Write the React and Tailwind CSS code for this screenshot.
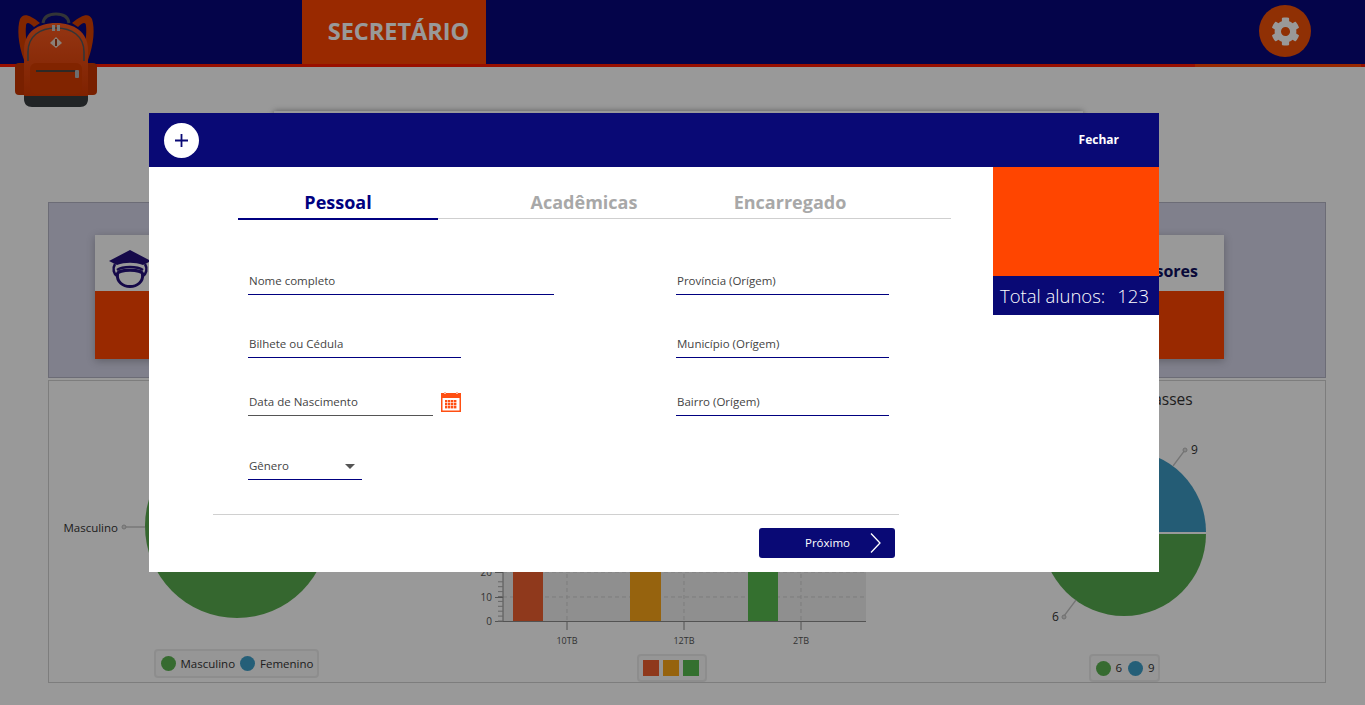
import React from "react";
import { FaCog } from "react-icons/fa";

const font = { fontFamily: '"Open Sans","Noto Sans",sans-serif' };

function Backpack() {
  return (
    <svg width="110" height="115" viewBox="0 0 110 115">
      <defs>
        <linearGradient id="bp" x1="0" y1="0" x2="0" y2="1">
          <stop offset="0" stopColor="#f85a20" />
          <stop offset="1" stopColor="#d23800" />
        </linearGradient>
      </defs>
      <path d="M43 23C44 16 50 14 56 14C62 14 68 16 69 23" fill="none" stroke="#55595c" strokeWidth="3" />
      <path d="M24 60C18 44 17 28 20 19C23 13 29 14 40 23L34 27C29 22 26 22 26 26C25 34 27 44 28 50Z" fill="#d84000" />
      <path d="M88 60C94 44 95 28 92 19C89 13 83 14 72 23L78 27C83 22 86 22 86 26C87 34 85 44 84 50Z" fill="#d84000" />
      <rect x="15" y="63" width="20" height="32" rx="4" fill="#c83600" />
      <rect x="77" y="63" width="20" height="32" rx="4" fill="#c83600" />
      <path d="M24 99V50C24 32 38 23 56 23C74 23 88 32 88 50V99Z" fill="url(#bp)" />
      <path d="M28 61V52C28 36 40 28 56 28C72 28 84 36 84 52V61" fill="none" stroke="#55595c" strokeWidth="1.6" />
      <rect x="52" y="25" width="3" height="6" fill="#c9c9c9" />
      <rect x="57" y="25" width="3" height="6" fill="#c9c9c9" />
      <path d="M56 37L62 43L56 48L50 43Z" fill="#e8d5c8" />
      <rect x="55" y="39" width="2" height="7" fill="#a83a10" />
      <rect x="30" y="63" width="52" height="31" rx="6" fill="#d83c00" />
      <rect x="36" y="70" width="42" height="2" fill="#4b4540" />
      <rect x="75" y="70" width="4" height="8" rx="1" fill="#b8b8b8" />
      <path d="M24 96H88V99C88 104 85 107 80 107H32C27 107 24 104 24 99Z" fill="#383d40" />
    </svg>
  );
}

function GradIcon() {
  return (
    <svg width="60" height="42" viewBox="0 0 60 42" className="block">
      <path d="M1 13L22 2L43 13L35 17C27 14 17 14 9 17Z" fill="#24107a" />
      <path d="M7 16C4 21 6 26 9 28M37 16C40 21 38 26 35 28" fill="none" stroke="#24107a" strokeWidth="2.5" />
      <path d="M9 22C15 18 29 18 35 22" fill="none" stroke="#24107a" strokeWidth="2.5" />
      <path d="M9.5 26C9.5 21 34.5 21 34.5 26C35.5 34 29 38.5 22 38.5C15 38.5 8.5 34 9.5 26Z" fill="none" stroke="#24107a" strokeWidth="3" />
    </svg>
  );
}

function Card({ children, right }) {
  return (
    <div className="w-[225px] h-[124px] flex flex-col shadow-[0_2px_8px_rgba(0,0,0,0.25)]">
      <div className={`h-[56px] bg-white flex ${right ? "justify-end items-end pb-[8px] pr-[26px]" : "items-start pl-[13px] pt-[13px]"}`}>{children}</div>
      <div className="h-[68px] bg-[#ff4500]" />
    </div>
  );
}

function LegendBox({ children, className }) {
  return (
    <div className={`flex items-center rounded-[4px] border-2 border-[#ececec] bg-[#fafafa] text-[11.5px] text-[#333] ${className}`}>
      {children}
    </div>
  );
}

function Dot({ className }) {
  return <span className={`w-[15px] h-[15px] shrink-0 rounded-full ${className}`} />;
}

function LeftChart() {
  return (
    <svg width="378" height="268" className="block">
      <circle cx="188" cy="145" r="92" fill="#59ac4f" />
      <path d="M75 146H96" stroke="#c9c9c9" strokeWidth="1.5" />
      <circle cx="75" cy="146" r="2" fill="#e0e0e0" stroke="#bbb" />
      <text x="69" y="151" textAnchor="end" fontSize="11.5" fill="#333">Masculino</text>
    </svg>
  );
}

function BarChart() {
  const minors = [];
  for (let i = 0; i < 9; i++) minors.push(240 - i * 4.9);
  return (
    <svg width="490" height="274" className="block">
      <rect x="76" y="60" width="363" height="180" fill="#eeeeee" />
      {[140, 257, 374].map((x) => (
        <path key={x} d={`M${x} 60V240`} stroke="#cfcfcf" strokeDasharray="4 3" />
      ))}
      {[216, 191].map((y) => (
        <path key={y} d={`M76 ${y}H439`} stroke="#cfcfcf" strokeDasharray="4 3" />
      ))}
      <rect x="86" y="100" width="30" height="140" fill="#ee6030" />
      <rect x="203" y="100" width="31" height="140" fill="#fba518" />
      <rect x="321" y="100" width="30" height="140" fill="#58bb4f" />
      <path d="M76 240.5H439M76 100V240" stroke="#8a8a8a" />
      <path d="M68 240.5H76M68 216.5H76M68 191.5H76" stroke="#8a8a8a" />
      {minors.map((y) => (
        <path key={y} d={`M71 ${y}H76`} stroke="#aaaaaa" />
      ))}
      {[140, 257, 374].map((x) => (
        <path key={x} d={`M${x} 240V249`} stroke="#8a8a8a" />
      ))}
      <text x="65" y="244" textAnchor="end" fontSize="10" fill="#555">0</text>
      <text x="65" y="220" textAnchor="end" fontSize="10" fill="#555">10</text>
      <text x="65" y="195" textAnchor="end" fontSize="10" fill="#555">20</text>
      <text x="140" y="263" textAnchor="middle" fontSize="9" fill="#555">10TB</text>
      <text x="257" y="263" textAnchor="middle" fontSize="9" fill="#555">12TB</text>
      <text x="374" y="263" textAnchor="middle" fontSize="9" fill="#555">2TB</text>
    </svg>
  );
}

function RightChart() {
  return (
    <svg width="408" height="274" className="block">
      <text x="209" y="24" textAnchor="middle" fontSize="15.5" fill="#333">Alunos por classes</text>
      <path d="M125 151A82 82 0 0 1 289 151Z" fill="#3d9ac3" />
      <path d="M125 153A82 82 0 0 0 289 153Z" fill="#56ab4f" />
      <path d="M256 85L268 69" stroke="#c4c4c4" strokeWidth="1.3" />
      <circle cx="268" cy="69" r="2" fill="#e0e0e0" stroke="#bbb" />
      <text x="274" y="73" fontSize="12" fill="#333">9</text>
      <path d="M159 219L147 235" stroke="#c4c4c4" strokeWidth="1.3" />
      <circle cx="147" cy="236" r="2" fill="#e0e0e0" stroke="#bbb" />
      <text x="135" y="240" fontSize="12" fill="#333">6</text>
    </svg>
  );
}

function Field({ label, w, line = "border-[#000080]", mt = "", children }) {
  return (
    <div className={`h-[30px] flex items-end justify-between pl-[1px] pr-[7px] pb-[4px] border-b ${line} ${w} ${mt}`}>
      <span className="text-[11.5px] leading-[18px] text-[#444]">{label}</span>
      {children}
    </div>
  );
}

function CalendarIcon() {
  return (
    <svg width="20" height="20" viewBox="0 0 20 20" className="block">
      <rect x="0" y="1" width="20" height="19" fill="#ff4f12" />
      <rect x="1.5" y="6" width="17" height="12.5" fill="#fff" />
      <rect x="3" y="0" width="2" height="2" fill="#ffb8a0" />
      <rect x="15" y="0" width="2" height="2" fill="#ffb8a0" />
      {[8, 11, 14].map((y) =>
        [4, 7, 10, 13].map((x) => <rect key={`${x}-${y}`} x={x} y={y} width="2.4" height="2.4" fill="#ff4f12" />)
      )}
    </svg>
  );
}

function Modal() {
  return (
    <div className="absolute left-[149px] top-[113px] w-[1010px] h-[459px] bg-white flex flex-col">
      <div className="h-[54px] bg-[#090975] flex items-center justify-between pl-[15px] pr-[40px]">
        <div className="w-[35px] h-[35px] rounded-full bg-white flex items-center justify-center">
          <svg width="13" height="13" viewBox="0 0 13 13"><path d="M6.5 0V13M0 6.5H13" stroke="#090975" strokeWidth="1.8" /></svg>
        </div>
        <span className="text-[12px] font-bold text-white">Fechar</span>
      </div>
      <div className="flex flex-1">
        <div className="w-[844px]">
          <div className="ml-[89px] w-[713px] h-[52px] relative border-b border-[#cfcfcf] flex">
            <div className="w-[200px] h-[53px] border-b-2 border-[#000080] text-center pt-[23px] text-[18px] leading-[25px] font-bold text-[#000080]">Pessoal</div>
            <div className="w-[292px] text-center pt-[23px] text-[18px] leading-[25px] font-bold text-[#a8a8a8]">Acadêmicas</div>
            <div className="w-[120px] text-center pt-[23px] text-[18px] leading-[25px] font-bold text-[#a8a8a8]">Encarregado</div>
          </div>
          <div className="ml-[99px] mt-[46px] grid grid-cols-[428px_213px]">
            <Field label="Nome completo" w="w-[306px]" />
            <Field label="Província (Orígem)" w="w-[213px]" />
            <Field label="Bilhete ou Cédula" w="w-[213px]" mt="mt-[33px]" />
            <Field label="Município (Orígem)" w="w-[213px]" mt="mt-[33px]" />
            <div className="mt-[28px] w-[213px] flex items-end justify-between">
              <Field label="Data de Nascimento" w="w-[185px]" line="border-[#555]" />
              <div className="mb-[4px]"><CalendarIcon /></div>
            </div>
            <Field label="Bairro (Orígem)" w="w-[213px]" mt="mt-[28px]" />
            <Field label="Gênero" w="w-[114px]" mt="mt-[34px]">
              <svg width="10" height="5" viewBox="0 0 10 5" className="mb-[6px]"><path d="M0 0H10L5 5Z" fill="#555" /></svg>
            </Field>
          </div>
          <div className="ml-[64px] mt-[34px] w-[686px] border-t border-[#d0d0d0]" />
          <div className="ml-[610px] mt-[13px] w-[136px] h-[30px] rounded-[3px] bg-[#090975] flex items-center pl-[46px] pr-[14px] justify-between">
            <span className="text-[11.5px] text-white">Próximo</span>
            <svg width="11" height="20" viewBox="0 0 11 20"><path d="M1 0.5L10 10L1 19.5" fill="none" stroke="#fff" strokeWidth="1.3" /></svg>
          </div>
        </div>
        <div className="w-[166px]">
          <div className="h-[109px] bg-[#ff4500]" />
          <div className="h-[39px] bg-[#090975] flex items-center justify-between pl-[7px] pr-[10px] text-[18.5px] font-light text-white">
            <span>Total alunos:</span>
            <span>123</span>
          </div>
        </div>
      </div>
    </div>
  );
}

export default function App() {
  return (
    <div className="relative w-[1365px] h-[705px] overflow-hidden bg-white" style={font}>
      <div className="h-[64px] bg-[#08087c] flex items-stretch justify-between pl-[302px] pr-[54px]">
        <div className="w-[184px] bg-[#ff4500] flex items-center justify-center pl-[9px] text-[23.5px] font-bold text-white">SECRETÁRIO</div>
        <div className="w-[52px] h-[52px] mt-[5px] rounded-full bg-[#f05008] flex items-center justify-center text-white">
          <FaCog size={29} />
        </div>
      </div>
      <div className="h-[3px] bg-[#ff1c00] flex justify-end pr-[4px]">
        <div className="w-[166px] bg-[#ff4500]" />
      </div>
      <div className="absolute left-0 top-0"><Backpack /></div>

      <div className="mt-[44px] ml-[274px] w-[809px] h-[80px] bg-white shadow-[0_0_6px_rgba(0,0,0,0.4)]" />

      <div className="mt-[11px] ml-[48px] w-[1278px] h-[176px] bg-[#d5d5e9] border border-[#b5b5c5] flex items-start justify-between pl-[46px] pr-[101px] pt-[32px]">
        <Card><GradIcon /></Card>
        <Card right><span className="text-[16px] font-bold text-[#101060]">Professores</span></Card>
      </div>
      <div className="mt-[2px] ml-[48px] w-[1278px] h-[303px] border border-[#d0d0d0] flex">
        <div className="w-[378px] flex flex-col items-center">
          <LeftChart />
          <LegendBox className="w-[165px] h-[29px] mr-[4px] pl-[5px] gap-[5px]">
            <Dot className="bg-[#5bb351]" />
            <span>Masculino</span>
            <Dot className="bg-[#3f9fc9]" />
            <span>Femenino</span>
          </LegendBox>
        </div>
        <div className="w-[490px] flex flex-col items-center">
          <BarChart />
          <LegendBox className="w-[70px] h-[28px] pl-[4px] gap-[4px]">
            <span className="w-[16px] h-[16px] bg-[#ee6030]" />
            <span className="w-[16px] h-[16px] bg-[#fba518]" />
            <span className="w-[16px] h-[16px] bg-[#58bb4f]" />
          </LegendBox>
        </div>
        <div className="w-[408px] flex flex-col items-center">
          <RightChart />
          <LegendBox className="w-[71px] h-[28px] ml-[6px] pl-[5px] gap-[5px]">
            <Dot className="bg-[#5bb351]" />
            <span>6</span>
            <Dot className="bg-[#3f9fc9] ml-[1px]" />
            <span>9</span>
          </LegendBox>
        </div>
      </div>

      <div className="absolute inset-0 bg-black/40" />
      <Modal />
    </div>
  );
}
